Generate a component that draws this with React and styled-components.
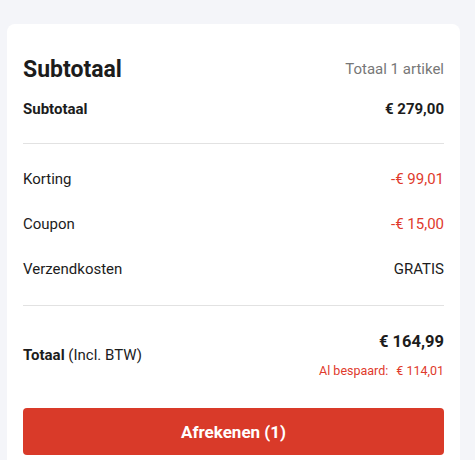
import React from 'react'
import styled, { createGlobalStyle } from 'styled-components'

const Global = createGlobalStyle`
  html, body { margin: 0; padding: 0; }
  body {
    background: #f4f5f9;
    font-family: Roboto, "Liberation Sans", sans-serif;
    color: #1c1c1c;
    overflow: hidden;
  }
`

const Page = styled.div`
  padding: 24px 15px 0 7px;
`

const Card = styled.div`
  background: #fff;
  border-radius: 8px;
  padding: 28px 16px 20px 16px;
  min-height: 460px;
`

const Header = styled.div`
  display: flex;
  justify-content: space-between;
  align-items: center;
  height: 34px;
`

const Title = styled.h2`
  margin: 0;
  font-size: 23px;
  font-weight: 700;
`

const Muted = styled.span`
  font-size: 15px;
  color: #777;
`

const Row = styled.div`
  display: flex;
  justify-content: space-between;
  align-items: center;
  height: 45px;
  font-size: 15px;
  font-weight: ${p => (p.bold ? 700 : 400)};
`

const Value = styled.span`
  color: ${p => (p.red ? '#e03a2c' : '#1c1c1c')};
`

const Divider = styled.hr`
  border: 0;
  border-top: 1px solid #e2e2e2;
  margin: ${p => p.m || '0'};
`

const Section = styled.div`
  padding: 12px 0 14px;
`

const TotalRow = styled.div`
  display: flex;
  justify-content: space-between;
  align-items: center;
  padding: 26px 0 30px;
`

const TotalLabel = styled.div`
  font-size: 15px;
  b { font-weight: 700; }
`

const TotalRight = styled.div`
  display: flex;
  flex-direction: column;
  align-items: flex-end;
  gap: 12px;
`

const Amount = styled.div`
  font-size: 16.5px;
  font-weight: 700;
`

const Saved = styled.div`
  font-size: 12.5px;
  color: #e03a2c;
  span { margin-left: 8px; }
`

const Button = styled.button`
  width: 100%;
  height: 47px;
  border: 0;
  border-radius: 4px;
  background: #d93a29;
  color: #fff;
  font-family: inherit;
  font-size: 17px;
  font-weight: 700;
  cursor: pointer;
`

export default function App() {
  return (
    <Page>
      <Global />
      <Card>
        <Header>
          <Title>Subtotaal</Title>
          <Muted>Totaal 1 artikel</Muted>
        </Header>
        <Row bold>
          <span>Subtotaal</span>
          <Value>€ 279,00</Value>
        </Row>
        <Divider m="12px 0 0" />
        <Section>
          <Row>
            <span>Korting</span>
            <Value red>-€ 99,01</Value>
          </Row>
          <Row>
            <span>Coupon</span>
            <Value red>-€ 15,00</Value>
          </Row>
          <Row>
            <span>Verzendkosten</span>
            <Value>GRATIS</Value>
          </Row>
        </Section>
        <Divider />
        <TotalRow>
          <TotalLabel><b>Totaal</b> (Incl. BTW)</TotalLabel>
          <TotalRight>
            <Amount>€ 164,99</Amount>
            <Saved>Al bespaard:<span>€ 114,01</span></Saved>
          </TotalRight>
        </TotalRow>
        <Button>Afrekenen (1)</Button>
      </Card>
    </Page>
  )
}
